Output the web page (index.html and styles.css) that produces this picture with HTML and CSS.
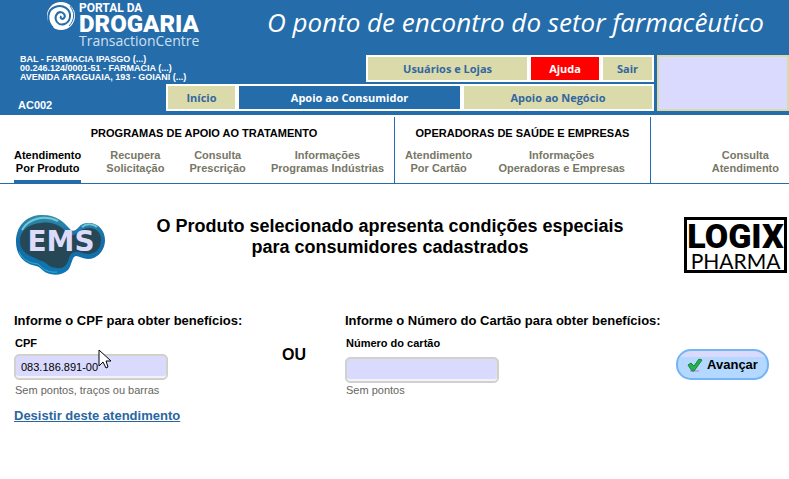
FILE: index.html
```html
<!DOCTYPE html>
<html lang="pt-BR">
<head>
<meta charset="utf-8">
<title>Portal da Drogaria</title>
<link rel="stylesheet" href="styles.css">
</head>
<body>
<header class="header">
  <div class="banner">
    <a class="brand" href="#">
      <svg class="brand-mark" viewBox="0 0 30 30" aria-hidden="true">
        <ellipse cx="15" cy="15" rx="14" ry="14" fill="#fff"/>
        <path d="M7 27C0 20 1 9 9 6c8-3 16 2 15 10-1 7-9 10-13 5-3-4-1-9 3-10 4 0 6 4 4 6-2 2-4 0-3-2" fill="none" stroke="#256caa" stroke-width="2"/>
        <path d="M24 5c5 6 5 14-1 20" fill="none" stroke="#256caa" stroke-width="1"/>
      </svg>
      <span class="brand-text">
        <span class="brand-top">PORTAL DA</span>
        <span class="brand-name">DROGARIA</span>
        <span class="brand-sub">TransactionCentre</span>
      </span>
    </a>
    <p class="slogan">O ponto de encontro do setor farmacêutico</p>
  </div>
  <div class="header-body">
    <div class="account">
      <p class="store">BAL - FARMACIA IPASGO (...)<br>00.246.124/0001-51 - FARMACIA (...)<br>AVENIDA ARAGUAIA, 193 - GOIANI (...)</p>
      <p class="code">AC002</p>
    </div>
    <nav class="menus">
      <div class="menu menu-top">
        <a class="tab users" href="#">Usuários e Lojas</a>
        <a class="tab help" href="#">Ajuda</a>
        <a class="tab exit" href="#">Sair</a>
      </div>
      <div class="menu menu-main">
        <a class="tab home" href="#">Início</a>
        <a class="tab consumer" href="#">Apoio ao Consumidor</a>
        <a class="tab business" href="#">Apoio ao Negócio</a>
      </div>
    </nav>
    <div class="panel"></div>
  </div>
</header>

<nav class="sections">
  <section class="section programs">
    <h2>PROGRAMAS DE APOIO AO TRATAMENTO</h2>
    <div class="links">
      <a class="current" href="#">Atendimento<br>Por Produto</a>
      <a href="#">Recupera<br>Solicitação</a>
      <a href="#">Consulta<br>Prescrição</a>
      <a href="#">Informações<br>Programas Indústrias</a>
    </div>
  </section>
  <section class="section operators">
    <h2>OPERADORAS DE SAÚDE E EMPRESAS</h2>
    <div class="links">
      <a href="#">Atendimento<br>Por Cartão</a>
      <a href="#">Informações<br>Operadoras e Empresas</a>
    </div>
  </section>
  <section class="section query">
    <div class="links">
      <a href="#">Consulta<br>Atendimento</a>
    </div>
  </section>
</nav>

<main>
  <div class="product">
    <svg class="ems" viewBox="0 0 92 62" role="img" aria-label="EMS">
      <defs>
        <linearGradient id="rim" x1="0" y1="0" x2="0" y2="1">
          <stop offset="0" stop-color="#318ba8"/><stop offset=".45" stop-color="#126ca9"/><stop offset="1" stop-color="#0e78b2"/>
        </linearGradient>
      </defs>
      <path d="M26 1C42 0 50 8 55 14c3 4 6 3 9 0C67 10 70 9 75 9c10 0 16 8 16 17 0 11-8 19-17 19-5 0-9-3-12-3-4 0-4 9-8 14-5 5-14 6-21 3-5-2-6-6-11-7C10 50 2 41 2 28 2 12 12 2 26 1z" fill="url(#rim)"/>
      <path d="M8 16C14 5 30 0 44 7M68 13c5-4 11-3 15 0" fill="none" stroke="#74c8d6" stroke-width="2"/>
      <path d="M5 38c4 8 10 11 19 12 5 5 10 9 19 8" fill="none" stroke="#39a9ce" stroke-width="1"/>
      <path d="M27 9c13-2 21 4 26 10 4 4 8 2 12-1 3-3 6-4 10-4 8 0 12 5 12 12 0 9-6 14-13 14-6 0-9-3-13-2-7 1-5 9-10 14-5 4-14 2-18-2-3-3-7-3-12-6C10 40 6 34 6 27 6 16 15 10 27 9z" fill="#254756"/>
      <text class="ems-text" x="47" y="37" text-anchor="middle">EMS</text>
    </svg>
    <h1>O Produto selecionado apresenta condições especiais<br>para consumidores cadastrados</h1>
    <div class="logix"><span class="logix-name">LOGIX</span><span class="logix-sub">PHARMA</span></div>
  </div>

  <form class="lookup">
    <div class="field-group">
      <h3>Informe o CPF para obter benefícios:</h3>
      <label for="cpf">CPF</label>
      <div class="input-wrap">
        <input id="cpf" type="text" value="083.186.891-00">
        <svg class="pointer" viewBox="0 0 13 21" aria-hidden="true"><path d="M1 1v16l4-4 3 6 2-1-2-6h5z" fill="#fff" stroke="#000"/></svg>
      </div>
      <small>Sem pontos, traços ou barras</small>
      <a class="cancel" href="#">Desistir deste atendimento</a>
    </div>
    <strong class="or">OU</strong>
    <div class="field-group card-group">
      <h3>Informe o Número do Cartão para obter benefícios:</h3>
      <label for="card">Número do cartão</label>
      <div class="input-wrap"><input id="card" type="text"></div>
      <small>Sem pontos</small>
    </div>
    <button class="next" type="button">
      <svg viewBox="0 0 16 14" aria-hidden="true"><path d="M3 13h9" stroke="#b9a8ee" stroke-width="2"/><path d="M1 7l3-2 3 3 5-7 3 1-8 11H5z" fill="#22b34b" stroke="#16843a"/></svg>
      Avançar
    </button>
  </form>
</main>
</body>
</html>
```
FILE: styles.css
```css
* { box-sizing: border-box; }
body { margin: 0; background: #fff; color: #000; font-family: "Liberation Sans", Arial, sans-serif; font-size: 11px; }
h1, h2, h3, p { margin: 0; }
a { color: inherit; text-decoration: none; }

.header { background: #256caa; color: #fff; padding-bottom: 4px; }
.banner { display: flex; height: 55px; padding-left: 46px; }
.brand { display: flex; gap: 3px; width: 221px; padding-top: 1px; }
.brand-mark { width: 30px; height: 30px; }
.brand-text { display: flex; flex-direction: column; white-space: nowrap; }
.brand-top { font: bold 12px/14px Roboto, sans-serif; }
.brand-name { font: 900 24px/18px Roboto, sans-serif; }
.brand-sub { font: 14px/15px "Open Sans", sans-serif; color: #cfe0f2; }
.slogan { font: italic 26px/44px "Open Sans", sans-serif; white-space: nowrap; }

.header-body { display: grid; grid-template-columns: 166px 1fr 132px; column-gap: 3px; }
.account { display: flex; flex-direction: column; justify-content: space-between; padding-left: 18px; font-weight: bold; white-space: nowrap; width: 163px; }
.store { padding-left: 2px; font-size: 9px; line-height: 9px; }
.code { line-height: 11px; }
.menus { display: flex; flex-direction: column; gap: 2px; margin-left: -3px; }
.menu { display: flex; gap: 4px; height: 27px; padding: 2px; background: #fff; }
.menu-top { width: 59%; margin-left: auto; }
.tab { display: flex; align-items: center; justify-content: center; background: #dadaaa; color: #3366a0; font: bold 11px/16px "Open Sans", sans-serif; }
.users { flex: 159; }
.help { flex: 68; background: #f00; color: #fff; }
.exit { flex: 49; }
.home { flex: 67; }
.consumer { flex: 221; background: #256caa; color: #fff; }
.business { flex: 188; }
.panel { background: #dadafe; border: 2px solid #dadaaa; }

.sections { display: grid; grid-template-columns: 394fr 256fr 139fr; padding-top: 2px; border-bottom: 1px solid #256caa; }
.section { display: flex; flex-direction: column; justify-content: flex-end; height: 66px; }
.section + .section { border-left: 1px solid #256caa; }
.section h2 { font-size: 11px; line-height: 13px; text-align: center; margin-bottom: 9px; }
.programs h2 { padding-left: 14px; }
.links { display: flex; justify-content: space-between; padding: 0 10px; line-height: 13px; font-weight: bold; color: #777766; text-align: center; white-space: nowrap; }
.programs .links { padding-left: 14px; }
.operators .links { padding-right: 25px; }
.query .links { justify-content: flex-end; }
.links a { padding-bottom: 5px; border-bottom: 3px solid transparent; }
.links .current { color: #000; border-color: #256caa; }

.product { display: flex; align-items: center; margin-top: 30px; padding: 0 2px 0 14px; }
.ems { width: 92px; height: 62px; }
.ems-text { font: bold 28px "DejaVu Sans", sans-serif; fill: #dcdcfa; }
.product h1 { flex: 1; padding: 0 10px 16px 0; font-size: 18px; line-height: 21px; text-align: center; }
.logix { width: 103px; height: 56px; border: 3px solid #000; display: flex; flex-direction: column; align-items: center; }
.logix-name { font: 900 34px/32px Roboto, sans-serif; }
.logix-sub { font: 21px/18px Lato, sans-serif; }

.lookup { display: grid; grid-template-columns: 268px 63px 1fr 113px; padding-left: 14px; margin-top: 37px; }
.field-group { display: flex; flex-direction: column; align-items: flex-start; white-space: nowrap; }
.field-group h3 { font-size: 13px; line-height: 16px; margin-bottom: 7px; }
.field-group label { font-weight: bold; line-height: 14px; padding-left: 1px; }
.input-wrap { position: relative; margin-top: 4px; }
.card-group .input-wrap { margin-top: 7px; }
.card-group small { margin-top: 1px; }
input { display: block; width: 154px; height: 26px; padding: 0 6px; border: 1px solid #cdcddd; border-radius: 5px; background: #dadafe; box-shadow: inset 0 0 0 1px #d6d6b4, inset 0 -3px #f2f2ff; font: 11px "Liberation Sans", Arial, sans-serif; }
small { font-size: 11px; line-height: 13px; margin-top: 4px; padding-left: 1px; color: #666660; }
.pointer { position: absolute; left: 84px; top: -5px; width: 13px; height: 21px; }
.cancel { margin-top: 11px; font-size: 13px; line-height: 16px; font-weight: bold; color: #2a66a0; text-decoration: underline; }
.or { padding-top: 32px; font-size: 16px; line-height: 20px; }
.next { align-self: start; display: flex; align-items: center; justify-content: center; gap: 4px; width: 93px; height: 31px; margin-top: 36px; padding: 0; border: 2px solid #73b5f5; border-radius: 15px; background: linear-gradient(#dadafe 6px, #b4d8ff 6px); color: #000; font: bold 13px "Liberation Sans", Arial, sans-serif; }
.next svg { width: 16px; height: 14px; }
```
